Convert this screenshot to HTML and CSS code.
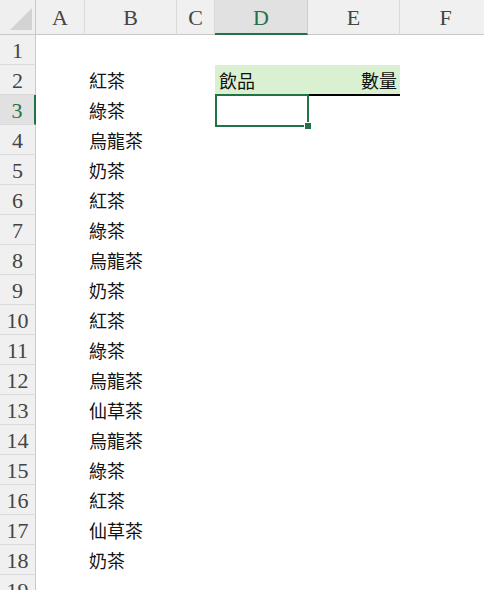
FILE: index.html
```html
<!DOCTYPE html>
<html lang="zh-Hant">
<head>
<meta charset="utf-8">
<link rel="stylesheet" href="styles.css">
</head>
<body>
<div class="sheet">
  <div class="corner"><svg class="tri" width="22" height="22" viewBox="0 0 22 22"><polygon points="0,22 22,22 22,0" fill="#d3d3d3"/></svg></div>
  <div class="ch">A</div><div class="ch">B</div><div class="ch">C</div><div class="ch sel">D</div><div class="ch">E</div><div class="ch">F</div>

  <div class="rh">1</div><div class="c"></div><div class="c"></div><div class="c"></div><div class="c"></div><div class="c"></div><div class="c"></div>
  <div class="rh">2</div><div class="c"></div><div class="c t">紅茶</div><div class="c"></div><div class="c t th">飲品</div><div class="c t th thr">數量</div><div class="c"></div>
  <div class="rh sel">3</div><div class="c"></div><div class="c t">綠茶</div><div class="c"></div><div class="c active"><span class="handle"></span></div><div class="c"></div><div class="c"></div>
  <div class="rh">4</div><div class="c"></div><div class="c t">烏龍茶</div><div class="c"></div><div class="c"></div><div class="c"></div><div class="c"></div>
  <div class="rh">5</div><div class="c"></div><div class="c t">奶茶</div><div class="c"></div><div class="c"></div><div class="c"></div><div class="c"></div>
  <div class="rh">6</div><div class="c"></div><div class="c t">紅茶</div><div class="c"></div><div class="c"></div><div class="c"></div><div class="c"></div>
  <div class="rh">7</div><div class="c"></div><div class="c t">綠茶</div><div class="c"></div><div class="c"></div><div class="c"></div><div class="c"></div>
  <div class="rh">8</div><div class="c"></div><div class="c t">烏龍茶</div><div class="c"></div><div class="c"></div><div class="c"></div><div class="c"></div>
  <div class="rh">9</div><div class="c"></div><div class="c t">奶茶</div><div class="c"></div><div class="c"></div><div class="c"></div><div class="c"></div>
  <div class="rh">10</div><div class="c"></div><div class="c t">紅茶</div><div class="c"></div><div class="c"></div><div class="c"></div><div class="c"></div>
  <div class="rh">11</div><div class="c"></div><div class="c t">綠茶</div><div class="c"></div><div class="c"></div><div class="c"></div><div class="c"></div>
  <div class="rh">12</div><div class="c"></div><div class="c t">烏龍茶</div><div class="c"></div><div class="c"></div><div class="c"></div><div class="c"></div>
  <div class="rh">13</div><div class="c"></div><div class="c t">仙草茶</div><div class="c"></div><div class="c"></div><div class="c"></div><div class="c"></div>
  <div class="rh">14</div><div class="c"></div><div class="c t">烏龍茶</div><div class="c"></div><div class="c"></div><div class="c"></div><div class="c"></div>
  <div class="rh">15</div><div class="c"></div><div class="c t">綠茶</div><div class="c"></div><div class="c"></div><div class="c"></div><div class="c"></div>
  <div class="rh">16</div><div class="c"></div><div class="c t">紅茶</div><div class="c"></div><div class="c"></div><div class="c"></div><div class="c"></div>
  <div class="rh">17</div><div class="c"></div><div class="c t">仙草茶</div><div class="c"></div><div class="c"></div><div class="c"></div><div class="c"></div>
  <div class="rh">18</div><div class="c"></div><div class="c t">奶茶</div><div class="c"></div><div class="c"></div><div class="c"></div><div class="c"></div>
  <div class="rh">19</div><div class="c"></div><div class="c"></div><div class="c"></div><div class="c"></div><div class="c"></div><div class="c"></div>
</div>
</body>
</html>
```

FILE: styles.css
```css
html, body {
  margin: 0;
  padding: 0;
  background: #ffffff;
  overflow: hidden;
}

.sheet {
  display: grid;
  grid-template-columns: 36px 49px 92px 38px 93px 92px 92px;
  grid-template-rows: 35px;
  grid-auto-rows: 30px;
  width: 492px;
}

.corner {
  background: #efefef;
  border-bottom: 1px solid #c8c8c8;
  border-right: 1px solid #c8c8c8;
  box-sizing: border-box;
  display: flex;
  align-items: flex-end;
  justify-content: flex-end;
  padding: 0 3px 4px 0;
}

.tri {
  display: block;
}

.ch {
  background: #f0f0f0;
  border-bottom: 1px solid #c8c8c8;
  border-right: 1px solid #dadada;
  box-sizing: border-box;
  display: flex;
  align-items: center;
  justify-content: center;
  font-family: "Liberation Serif", "DejaVu Serif", serif;
  font-size: 22px;
  color: #444444;
  padding-top: 2px;
}

.ch.sel {
  background: #e1e1e1;
  color: #217346;
  border-bottom: 2px solid #217346;
  border-right-color: #cfcfcf;
}

.rh {
  background: #f0f0f0;
  border-right: 1px solid #c8c8c8;
  border-bottom: 1px solid #dadada;
  box-sizing: border-box;
  display: flex;
  align-items: center;
  justify-content: center;
  font-family: "Liberation Serif", "DejaVu Serif", serif;
  font-size: 22px;
  color: #444444;
  padding-top: 3px;
}

.rh.sel {
  background: #e1e1e1;
  color: #217346;
  border-right: 2px solid #217346;
}

.c {
  background: #ffffff;
  box-sizing: border-box;
}

.t {
  display: flex;
  align-items: center;
  padding: 0 3px 0 4px;
  font-family: "Noto Sans CJK TC", "Noto Sans CJK SC", sans-serif;
  font-size: 18px;
  color: #111111;
  white-space: nowrap;
}

.th {
  background: #d9f1d0;
}

.thr {
  justify-content: flex-end;
  border-bottom: 2px solid #000000;
  position: relative;
  top: 1px;
  margin-top: -1px;
}

.active {
  position: relative;
}

.active::after {
  content: "";
  position: absolute;
  left: 0;
  top: -1px;
  right: -1px;
  bottom: -2px;
  border: 2px solid #217346;
}

.handle {
  position: absolute;
  right: -4px;
  bottom: -5px;
  width: 6px;
  height: 6px;
  background: #217346;
  border: 1px solid #ffffff;
  z-index: 2;
}
```
